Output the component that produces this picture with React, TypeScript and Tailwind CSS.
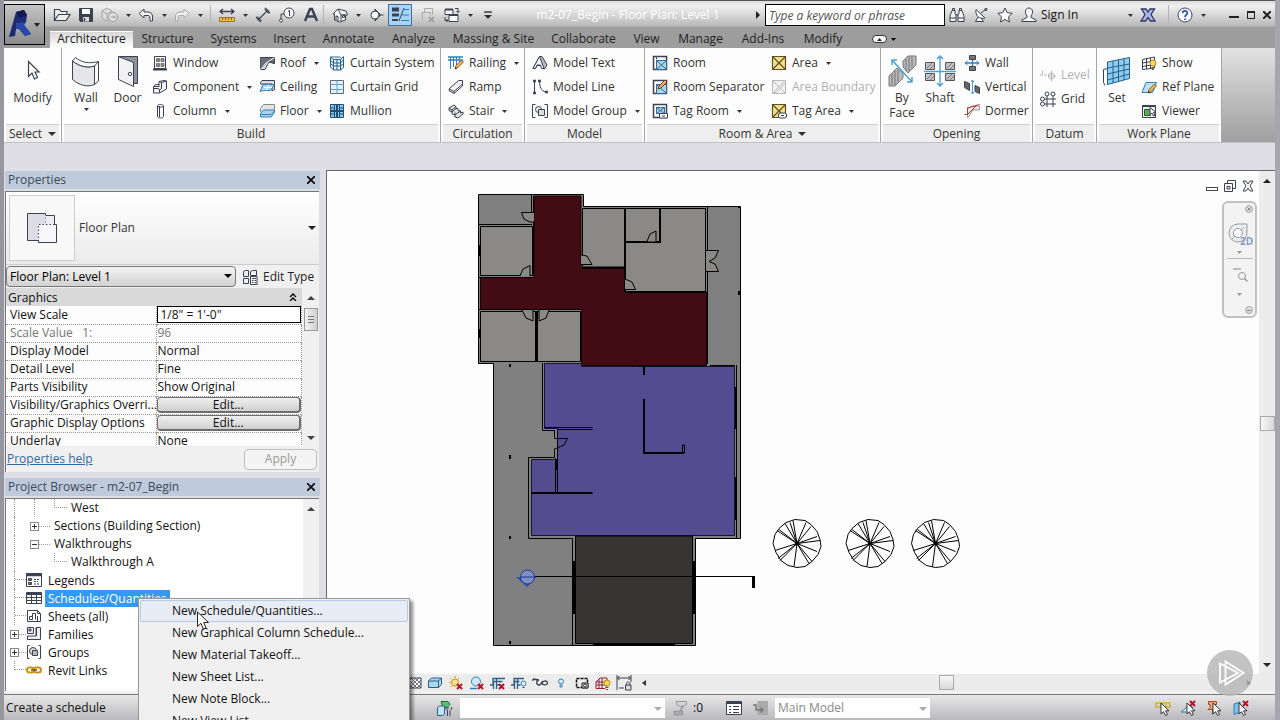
/**
 * App.tsx — Revit-style main window: ribbon, docked palettes,
 * drawing canvas, view control bar and status bar.
 */

import type { ReactNode } from 'react';
import clsx from 'clsx';

/* ------------------------------------------------------------------ */
/* Icons                                                               */
/* ------------------------------------------------------------------ */

const INK = '#3a4150';
const BLUE = '#2f7fb8';
const SKY = '#a9d6ee';
const GREY = '#a9a9a9';

interface IconProps {
  children: ReactNode;
  className?: string;
  box?: string;
}

function Icon({ children, className = 'h-4 w-4', box = '0 0 16 16' }: IconProps) {
  return (
    <svg viewBox={box} className={clsx('shrink-0', className)} fill="none" stroke={INK} aria-hidden>
      {children}
    </svg>
  );
}

function Caret({ className = 'text-[#333]' }: { className?: string }) {
  return (
    <svg viewBox="0 0 5 3" className={clsx('h-[3px] w-[5px] shrink-0', className)} aria-hidden>
      <path d="M0 0H5L2.5 3Z" fill="currentColor" />
    </svg>
  );
}

function BigCaret({ className = 'text-[#333]' }: { className?: string }) {
  return (
    <svg viewBox="0 0 8 4" className={clsx('h-1 w-2 shrink-0', className)} aria-hidden>
      <path d="M0 0H8L4 4Z" fill="currentColor" />
    </svg>
  );
}

const redCross = <path d="M9 9l5 5M14 9l-5 5" stroke="#b3122a" strokeWidth="2" />;
const pencil = (
  <g>
    <path d="M7 14l1-3.5L13.500 5l2 2L10 12.500Z" fill="#f0b64a" stroke="#6d4a1c" strokeWidth=".8" />
    <path d="M7 14l.6-2 1.400 1.400Z" fill="#222" stroke="none" />
  </g>
);
const bulb = (
  <g>
    <circle cx="12" cy="8" r="3" fill="#ffd95a" stroke="#b98a12" />
    <path d="M10.500 12.500h3M11 14.500h2" stroke="#6d5a2a" />
  </g>
);
const smallCursor = <path d="M6 3v11l2.500-2.300L10.500 15.500l2-1-2-3.700H14Z" fill="#fff" stroke="#222" strokeWidth=".9" />;

const icons = {
  open: (
    <Icon className="h-5 w-5" box="0 0 20 20">
      <path d="M2.500 15.500v-11h5l1.500 2h6v3M2.500 15.500l4-6H18l-4 6Z" fill="#eee" strokeWidth="1.200" />
    </Icon>
  ),
  save: (
    <Icon>
      <path d="M1.500 1.500h13v13h-12l-1-1Z" fill="#3a4150" />
      <path d="M4 2h8v5H4Z" fill="#fff" stroke="none" />
      <path d="M5 10h6v4.500H5Z" fill="#ddd" stroke="none" />
      <path d="M6.500 11v3" strokeWidth="1.500" />
    </Icon>
  ),
  sync: (
    <Icon className="h-5 w-5" box="0 0 20 20">
      <path d="M2 6l5-3 5 3v7l-5 3-5-3ZM2 6l5 3 5-3M7 9v7" stroke={GREY} fill="#ddd" />
      <circle cx="13" cy="12" r="4.500" stroke="#999" fill="#e4e4e4" />
      <path d="M11 12h4m-1.500-2l2 2-2 2" stroke="#999" />
    </Icon>
  ),
  undo: (
    <Icon>
      <path d="M6 2L1 6.500 6 11V8.500h4c1.500 0 2 1 2 2.500v3h2.500v-4c0-3-1.500-5-4.500-5H6Z" fill="#f4f4f4" />
    </Icon>
  ),
  redo: (
    <Icon>
      <path d="M10 2l5 4.500L10 11V8.500H6c-1.500 0-2 1-2 2.500v3H1.500v-4c0-3 1.500-5 4.500-5h4Z" fill="#eee" stroke={GREY} />
    </Icon>
  ),
  measure: (
    <Icon>
      <path d="M1 4.500h14M4 2L1 4.500 4 7M12 2l3 2.500L12 7" strokeWidth="1.300" />
      <path d="M.5 10.500h15v4H.5Z" fill="#f0c14b" stroke="#9b741a" />
      <path d="M3.500 11v2M6.500 11v2M9.500 11v2M12.500 11v2" stroke="#7a5a12" />
    </Icon>
  ),
  dimension: (
    <Icon>
      <path d="M3 13L13 3M1 10l5 5M10 1l5 5M3 9.500V13h3.500M9.500 3H13v3.500" strokeWidth="1.200" />
    </Icon>
  ),
  tag: (
    <Icon>
      <circle cx="10" cy="6" r="5" fill="#fff" />
      <path d="M9 4.500l1.500-1V9M5 7H2v6" />
      <circle cx="2" cy="13.500" r="1.500" fill="#fff" />
    </Icon>
  ),
  text: (
    <Icon>
      <path d="M2 14L7 2h2l5 12M4 9.500h8" strokeWidth="2.400" />
    </Icon>
  ),
  house: (
    <Icon>
      <path d="M1 7l5-5 8 2 1.500 4-2 .5V13l-6 2-5-2V7Z" fill="#f3f3f3" />
      <path d="M6 2l3 6v6.500M9 8l4.500-.5M4 13V9l2 .5V14M10.500 10.500v-2l2-.3v2Z" />
    </Icon>
  ),
  section: (
    <Icon>
      <path d="M7 2l5.500 6L7 14Z" fill="#30343c" />
      <circle cx="7" cy="8" r="4" fill="#fff" />
      <path d="M11 8h4.500" />
    </Icon>
  ),
  thin: (
    <Icon className="h-[18px] w-[18px]" box="0 0 18 18">
      <path d="M1 3.500h7" strokeWidth="4" />
      <path d="M1 9h7" strokeWidth="3" />
      <path d="M1 14h6" strokeWidth="2" />
      <path d="M8 15L13 2" />
      <path d="M12 3.500h6M11 9h7M10 14.500h8" stroke={BLUE} />
    </Icon>
  ),
  closeHidden: (
    <Icon>
      <path d="M4.500 5.500v-4h8v6M2.500 12.500v-7h8v3M2 5.500h8" stroke={GREY} />
      <path d="M9 10l5 5M14 10l-5 5" stroke="#999" strokeWidth="1.700" />
    </Icon>
  ),
  switchWin: (
    <Icon>
      <path d="M1 2.500h8v5H1Z" fill="#fff" />
      <path d="M5 7.500h9v7H5Z" fill="#fff" />
      <path d="M1 2.500h8M5 8h9" strokeWidth="2" />
      <path d="M11 1.500h3v4M12.500 4l1.500 1.500L15.500 4M1 10v3.500h3M2.500 12L4 13.500 2.500 15" />
    </Icon>
  ),
  customize: (
    <Icon className="h-2 w-2" box="0 0 8 8">
      <path d="M0 1h8" strokeWidth="1.500" />
      <path d="M0 4h8L4 8Z" fill="#333" stroke="none" />
    </Icon>
  ),
  binoculars: (
    <Icon>
      <path d="M3 3.500h3v3l1 1.500v6.500H1V9ZM10 3.500h3L15 9v5.500H9V8l1-1.500ZM7 8h2M3.500 1.500h2v2h-2ZM10.500 1.500h2v2h-2ZM1 11h6M9 11h6" fill="#f4f4f4" />
    </Icon>
  ),
  dish: (
    <Icon>
      <path d="M3 2.500c-1 6 3 10 9 8.500ZM7.500 6.500L13 2M5 10l-2.500 4.500h8L8 11" fill="#fff" />
      <circle cx="13" cy="2.500" r="1.200" />
    </Icon>
  ),
  star: (
    <Icon>
      <path d="M8 1l2.200 4.700 5 .6-3.700 3.500 1 5.200L8 12.400 3.500 15l1-5.200L.8 6.300l5-.6Z" fill="#fff" />
    </Icon>
  ),
  person: (
    <Icon>
      <path d="M8 1c4 0 4.500 5 2 8v1.500l5 2.500v1.500H1V13l5-2.500V9C3.500 6 4 1 8 1Z" fill="#f7f7f7" />
    </Icon>
  ),
  exchange: (
    <Icon>
      <path d="M1.500 2H6l2 3 2-3h4.500l-3.500 5.500L15 14H10.500L8 10.500 5.500 14H1l4-6.500Z" fill="#a9b7e8" stroke="#2c3566" strokeWidth="1.300" />
    </Icon>
  ),
  help: (
    <Icon>
      <circle cx="8" cy="8" r="7" fill="#fff" stroke="#3b4470" />
      <path d="M5.700 6.200c0-3 4.600-3 4.600 0C10.300 8 8 8 8 10M8 11.500v1.500" stroke="#2a4fae" strokeWidth="1.700" />
    </Icon>
  ),
  modify: (
    <Icon className="h-6 w-6" box="0 0 24 24">
      <path d="M7.500 2.500v15l3.500-3.500 2.500 6 3-1.500-2.500-5.500h4Z" fill="#fff" strokeWidth="1.200" />
    </Icon>
  ),
  wall: (
    <Icon className="h-8 w-8" box="0 0 32 32">
      <path d="M2.500 6c8 6 15 7 22 5V29.500c-7 3-15 1-22-5Z" fill="#e6e6ea" />
      <path d="M2.500 6l3-3.500c6 5 13 6.500 23 4V26l-4 3.500V11c-7 2-14 1-22-5Z" fill="#fbfbfb" />
      <path d="M24.500 11l4-4.500" />
    </Icon>
  ),
  door: (
    <Icon className="h-8 w-8" box="0 0 32 32">
      <path d="M6.500 1.500h19v27H21" fill="#8f929a" />
      <path d="M6.500 1.500l15 6v24l-15-7Z" fill="#f1f1f4" />
      <circle cx="18" cy="19" r="1.700" fill="#fff" />
    </Icon>
  ),
  window: (
    <Icon>
      <path d="M2.500 1.500h11v12h-11Z" fill="#fff" />
      <path d="M1 14.500h14" strokeWidth="2" />
      <path d="M4.500 3.500h3v3h-3ZM9 3.500h3v3H9ZM4.500 8.500h3v3h-3ZM9 8.500h3v3H9Z" fill="#888" stroke="#777" />
    </Icon>
  ),
  component: (
    <Icon>
      <path d="M1.500 7.500V14h6l7-4V2L12 1.500l-5 1V7.500Z" fill="#f2f2f4" />
      <path d="M1.500 7.500L4 5.500h3M7 2.500l2.500 1 5-1.500M9.500 3.500v6l-2 1.500V14M1.500 9.500h5l1 1.500" />
    </Icon>
  ),
  column: (
    <Icon>
      <path d="M5.500 3c0-2 6-2 6 0v10.500c0 2-6 2-6 0Z" fill="#fff" />
      <path d="M7.500 3v11M5.500 3c0 1.500 6 1.500 6 0" />
    </Icon>
  ),
  roof: (
    <Icon>
      <path d="M1.500 2.500h14v6L10 7l-4 7.500H1.500Z" fill="#dcdce0" />
      <path d="M1.500 2.500h14v6L9 6l-7.500 8.500" fill="#6c7078" />
      <path d="M15.500 2.500L7 8 1.500 14.500" stroke="#fff" />
    </Icon>
  ),
  ceiling: (
    <Icon>
      <path d="M1.500 3.500L3 1.500h12.500v9L13 12V5H1.500Z" fill="#ddd" />
      <path d="M1 12.500L4 5.500h11.500l-4 6H4.500Z" fill={SKY} stroke={BLUE} />
      <path d="M5 8.500h8M9.500 5.500L7 11.500" stroke="#fff" />
    </Icon>
  ),
  floor: (
    <Icon>
      <path d="M1.500 9V5.500l3-4h11v7L12 13" fill="#e4e4e4" stroke="#888" />
      <path d="M1.500 10.500L4.500 7h11v2.500L12 14H1.500Z" fill={SKY} stroke={BLUE} />
      <path d="M1.500 11.500H12L15.500 8" stroke={BLUE} />
    </Icon>
  ),
  curtainSystem: (
    <Icon>
      <path d="M1.500 2l3 2.500h7l3-3v11l-3 2.500h-7l-3-3Z" fill="#e6f3fa" stroke="#25618c" />
      <path d="M4.500 4.500V15M11.500 4.500V15M8 4.500V15M1.500 5.500l3 2.500h7l3-3M1.500 8.500l3 2.500h7l3-2.500M1.500 2h9l1.500 1" stroke="#25618c" />
    </Icon>
  ),
  curtainGrid: (
    <Icon>
      <path d="M1.500 1.500h13v13h-13Z" fill="#e4f1f9" stroke="#667" />
      <path d="M8 1.500v13M1.500 5.500h13M1.500 10.500h13" stroke="#5ca3d0" />
    </Icon>
  ),
  mullion: (
    <Icon>
      <path d="M1.500 1.500h13v13h-13Z" fill="#8fc4e4" stroke="#1f4f74" />
      <path d="M5.500 1.500v13M10.500 1.500v13M1.500 5h4M10.500 5h4M1.500 11h4M10.500 11h4" stroke="#1f4f74" />
      <path d="M8 2v12M1.500 8h13" stroke="#1f4f74" strokeWidth="2" />
    </Icon>
  ),
  railing: (
    <Icon>
      <path d="M0 2h15M0 5h15" stroke={BLUE} strokeWidth="1.500" />
      <path d="M2.500 2v12M5.500 2v10M8.500 2v8M11.500 2v5" stroke={BLUE} />
      {pencil}
    </Icon>
  ),
  ramp: (
    <Icon>
      <path d="M1 10L10.500 1.500h4V7L6 14.500 1.500 12Z" fill="#f4f4f4" />
      <path d="M1 10l5 2.500L14.500 5M6 12.500v2" />
    </Icon>
  ),
  stair: (
    <Icon>
      <path d="M1 5l5-3 2 1.500v2l2 0v2l2.500.5V10L15 9v2l-5 4-3-1v-2l-3-1V9L1 7.500Z" fill="#e3e3e6" />
      <path d="M1 5l3 2 4-3.500M4 9l4-3.500M7 12l5.500-4M4 7v2M7 9.500V12" />
    </Icon>
  ),
  modelText: (
    <Icon>
      <path d="M1 13.500L7.500 1.500H10l5 8.500-2 3.500h-2.500L9 10.500H5l-1.500 3Z" fill="#b9bbc1" />
      <path d="M1 13.500L7.500 1.500l4.500 12H9.500L8.500 10H5l-1.500 3.500Z" fill="#fff" />
    </Icon>
  ),
  modelLine: (
    <Icon>
      <path d="M2.500 2v12M7.500 2c0 6 2 10 6 11" />
      <path d="M1.500 1h2v2h-2ZM1.500 13h2v2h-2ZM6.500 1h2v2h-2ZM13.500 12h2v2h-2Z" fill={INK} strokeWidth=".8" />
    </Icon>
  ),
  modelGroup: (
    <Icon>
      <path d="M3.500 1.500h-3v13h3M12.500 1.500h3v13h-3" />
      <circle cx="6.500" cy="6.500" r="3" fill="#eee" />
      <path d="M6.500 6.500h6v6h-6Z" fill="#ddd" />
    </Icon>
  ),
  room: (
    <Icon>
      <path d="M1.500 1.500h13v13h-13Z" fill="#fff" strokeWidth="1.500" />
      <path d="M4.500 5.500h10v9h-10ZM4.500 5.500l10 9M14.500 5.500l-10 9M4.500 1.500v3" fill={SKY} stroke="#346a8c" />
    </Icon>
  ),
  roomSeparator: (
    <Icon>
      <path d="M1.500 1.500h13v13h-13Z" fill="#fff" strokeWidth="1.500" />
      <path d="M4.500 5.500h10v9h-10ZM4.500 5.500l10 9" fill={SKY} stroke="#346a8c" />
      <path d="M6 10l1-3 6-6 2 2-6 6Z" fill="#f0b070" stroke="#6d3c1c" />
    </Icon>
  ),
  tagRoom: (
    <Icon>
      <path d="M1.500 1.500h13v13h-13Z" fill="#fff" strokeWidth="1.500" />
      <path d="M4.500 4.500h8v6h-8ZM4.500 4.500l8 6M12.500 4.500l-8 6" fill={SKY} stroke="#346a8c" />
      <path d="M7.500 10.500h8v4.500h-8Z" fill="#fff" />
      <path d="M10 13h3" />
    </Icon>
  ),
  area: (
    <Icon>
      <path d="M1.500 1.500h13v13h-13ZM1.500 1.500l13 13M14.500 1.500l-13 13" fill="#f8e08a" stroke="#5c4f28" strokeWidth="1.200" />
    </Icon>
  ),
  areaBoundary: (
    <Icon>
      <path d="M1.500 1.500h13v13h-13ZM1.500 1.500l6 6M14.500 14.500l-5-5M2 14L12.500 3l1.500 1.500L5 13.500Z" fill="#f1f1f1" stroke="#b8b8b8" />
    </Icon>
  ),
  tagArea: (
    <Icon>
      <path d="M1.500 1.500h13v13h-13ZM1.500 1.500l13 13M14.500 1.500l-13 13" fill="#f8e08a" stroke="#5c4f28" strokeWidth="1.200" />
      <rect x="7.500" y="10" width="8" height="5" rx="2" fill="#fff" />
      <path d="M10 12.500h3" />
    </Icon>
  ),
  byFace: (
    <Icon className="h-8 w-8" box="0 0 32 32">
      <path d="M17 12V6l5-5h8v9l-8 8ZM3 31V21l8-8 6 5v5l-8 8Z" fill="#b9b9bd" stroke="#777" />
      <path d="M20 4v12M23 2v14M26 2v11M6 19v11M9 16v14M12 15v12" stroke="#777" />
      <path d="M6 5l20 22M6 10V5h5M26 22v5h-5" stroke="#4f9fd6" strokeWidth="1.500" />
    </Icon>
  ),
  shaft: (
    <Icon className="h-8 w-8" box="0 0 32 32">
      <path d="M1.500 7.500h9v7h-9ZM21.500 7.500h9v7h-9ZM1.500 18.500h9v7h-9ZM21.500 18.500h9v7h-9Z" fill="#c2c2c4" stroke="#555" />
      <path d="M3 13l5-5M6 14l4-4M23 13l5-5M26 14l4-4M3 24l5-5M6 25l4-4M23 24l5-5M26 25l4-4" stroke="#777" />
      <path d="M16 1v30M0 16.500h32M13 4l3-3 3 3M13 28l3 3 3-3" stroke="#4f9fd6" strokeWidth="1.400" />
    </Icon>
  ),
  wallOpening: (
    <Icon>
      <path d="M5.500 .5h6v4h-6ZM5.500 11.500h6v4h-6Z" fill="#777" />
      <path d="M8.500 5v6M1 8h14" stroke={BLUE} strokeWidth="1.300" />
      <path d="M3.500 6L1 8l2.500 2M12.500 6L15 8l-2.500 2" stroke={BLUE} />
    </Icon>
  ),
  vertical: (
    <Icon>
      <path d="M.5 2.500l5 2v7l-5-3ZM11 6.500l4.500 2v6l-4.500-2Z" fill="#666" />
      <path d="M8.500 1v14M7 3l1.500-2L10 3M7 13l1.500 2 1.500-2" stroke="#4f9fd6" />
    </Icon>
  ),
  dormer: (
    <Icon>
      <path d="M3.500 14.500v-9l5-2.500h7v4H9l-5 7.500Z" fill="#ececec" stroke="#999" />
      <path d="M.5 11.500h3v-7M3.500 5l12-3.500M3.500 11.500L13 2" stroke="#a83a36" />
    </Icon>
  ),
  level: (
    <Icon>
      <path d="M0 8h9M2.500 4v4" stroke="#b4b4b4" strokeDasharray="3 1" />
      <circle cx="11.500" cy="9" r="3" stroke="#b4b4b4" />
      <path d="M11.500 4v10M8 9h8" stroke="#b4b4b4" />
    </Icon>
  ),
  grid: (
    <Icon>
      <circle cx="7" cy="3" r="2" />
      <circle cx="13" cy="3" r="2" />
      <circle cx="2.500" cy="8" r="2" />
      <circle cx="2.500" cy="13" r="2" />
      <path d="M7 5v11M13 5v11M4.500 8H16M4.500 13H16" />
    </Icon>
  ),
  set: (
    <Icon className="h-8 w-8" box="0 0 32 32">
      <path d="M4 30.500l-1.500-3V14.500l4-1" fill="#fff" />
      <path d="M6.500 7l22-4.500v21l-22 6Z" fill="#8fcdf0" stroke="#25618c" />
      <path d="M12 6V28M17.500 5V26.500M23 4v21M6.500 13l22-4M6.500 19l22-5M6.500 25l22-6" stroke="#25618c" />
    </Icon>
  ),
  show: (
    <Icon>
      <path d="M1.500 4.500L13.500 2v11L1.500 14.500ZM5.500 3.500V14M9.500 3v10.500M1.500 8l12-2M1.500 11.500l12-2" fill="#fff" />
      {bulb}
    </Icon>
  ),
  refPlane: (
    <Icon>
      <path d="M1 13.500L5 3.500h10.500l-4 10Z" fill="#bfe0f3" stroke={BLUE} />
      {pencil}
    </Icon>
  ),
  viewer: (
    <Icon>
      <path d="M1.500 2.500h13v12h-13Z" fill="#eee" />
      <path d="M1.500 3h13" strokeWidth="2" />
      <path d="M3.500 6.500h6v6h-6Z" fill="#62a65c" stroke="#27602a" />
      <path d="M9 4.500v7l2-1.500 1.500 3 1.500-.7-1.500-3H15Z" fill="#fff" />
    </Icon>
  ),
  editType: (
    <Icon>
      <path d="M1.500 2.500l2-1h3v6h-5ZM8.500 2.500l2-1h4v5M1.500 9.500h5v5h-5ZM8.500 2.500v4h6" />
      <path d="M8.500 7.500h6.500v8H8.500ZM10 9.500h4M10 11.500h1.500M12.500 11.500H14M10 13.500h1.500M12.500 13.500H14" fill="#fff" />
    </Icon>
  ),
  legends: (
    <Icon>
      <path d="M.5 1.500h15v13H.5Z" fill="#fff" />
      <path d="M.5 3h15" strokeWidth="2.500" />
      <path d="M2.500 6.500h3v2h-3ZM2.500 10.500h3v2h-3Z" fill="#777" />
      <path d="M8 7.500h6M8 9.500h4M8 12h6" strokeDasharray="2 1" />
    </Icon>
  ),
  schedules: (
    <Icon>
      <path d="M.5 2.500h15v11H.5Z" fill="#fff" />
      <path d="M.5 4h15" strokeWidth="2" />
      <path d="M5.500 3v10M10.500 3v10M.5 7.500h15M.5 10.500h15" />
    </Icon>
  ),
  sheets: (
    <Icon>
      <path d="M1.500 2.500h10l3 3v8h-13Z" fill="#fff" />
      <path d="M11.500 2.500v3h3M3.500 8.500h3v3h-3ZM6.500 8.500v-3h3v6M11.500 8v5" />
    </Icon>
  ),
  families: (
    <Icon>
      <path d="M1.500 1.500h6v6h-6ZM10 1.500h4.500v12h-13V10H10Z" fill="#eee" />
      <path d="M3 3h2v2H3ZM10.500 2v8" />
    </Icon>
  ),
  groups: (
    <Icon>
      <path d="M3.500 1.500h-2v13h2M12.500 1.500h2v13h-2" />
      <circle cx="7" cy="7" r="3.500" fill="#ddd" />
      <path d="M6.500 6.500h5v5h-5Z" fill="#bbb" />
    </Icon>
  ),
  links: (
    <Icon>
      <rect x="1" y="5.500" width="7" height="5" rx="2.500" stroke="#c89414" strokeWidth="2" />
      <rect x="8" y="5.500" width="7" height="5" rx="2.500" stroke="#c89414" strokeWidth="2" />
      <path d="M5 8h6" stroke="#6d4f08" strokeWidth="1.500" />
    </Icon>
  ),
  hatch: (
    <Icon>
      <path d="M3 3h12v10H3Z" fill="#fff" />
      <path d="M3 6l3-3M3 10l7-7M3 13L13 3M7 13l8-8M11 13l4-4M3 9l4 4M3 5l8 8M5 3l10 10M9 3l6 6" strokeWidth=".7" />
    </Icon>
  ),
  visualStyle: (
    <Icon>
      <path d="M1.500 6l3-3h10v6.500l-3 3h-10Z" fill={SKY} stroke="#2d5e86" />
      <path d="M1.500 6h10v6.500M11.500 6l3-3" stroke="#2d5e86" />
    </Icon>
  ),
  sun: (
    <Icon>
      <circle cx="7" cy="7.500" r="3.500" fill="#fbe38a" stroke="#c58a1a" />
      <path d="M7 1v2M1 7.500h1.500M2.500 3l1 1M11 3l-1 1M2.500 12l1-1" stroke="#c58a1a" />
      {redCross}
    </Icon>
  ),
  shadow: (
    <Icon>
      <circle cx="7" cy="6.500" r="4.500" fill="#cfe6f4" stroke={BLUE} />
      <path d="M1 13.500h7" stroke={BLUE} strokeWidth="1.500" />
      {redCross}
    </Icon>
  ),
  crop: (
    <Icon>
      <path d="M0 10h3V3.500h12M3.500 14V6.500h9M6.500 10h3M6.500 14V3.500" stroke="#2d5e86" strokeWidth="1.300" />
      {redCross}
    </Icon>
  ),
  cropShow: (
    <Icon>
      <path d="M0 10h3V3.500h10M3.500 14V6.500h5M6.500 10h3M6.500 14V3.500" stroke="#2d5e86" strokeWidth="1.300" />
      <circle cx="12.500" cy="8.500" r="2.500" fill="#e6f4fc" stroke={BLUE} />
      <path d="M11.500 12.500h2" />
    </Icon>
  ),
  glasses: (
    <Icon>
      <path d="M1 4l6 1M7 5c-3 0-3 5 0 5s3-5 3-2.500M10 8c0-2 5-3 5.500-.5S11 11 10 8M1 4v2" strokeWidth="1.300" />
    </Icon>
  ),
  lightbulb: (
    <Icon>
      <circle cx="8" cy="6.500" r="2.500" fill="#d8effc" stroke={BLUE} />
      <path d="M7 10h2v2H7Z" fill="#fff" stroke={BLUE} />
    </Icon>
  ),
  cropRegion: (
    <Icon>
      <path d="M2.500 3.500h11v9h-11Z" stroke="#111" strokeDasharray="3 1" strokeWidth="1.500" />
      <path d="M8 8h6v5H8Z" fill="#fff" stroke="#111" />
      <circle cx="11" cy="10.500" r="1.500" stroke="#111" />
    </Icon>
  ),
  analytical: (
    <Icon>
      <path d="M1 7l4-4h7v8l-2 2.500H1ZM4 4v9M7 3v10M1 7h11M1 10h11" stroke="#8b2630" />
      {bulb}
    </Icon>
  ),
  constraint: (
    <Icon>
      <path d="M1 0v15M15 0v7M1 3h14M3.500 1L1.500 3l2 2M12.500 1l2 2-2 2M3 13h5" />
      <path d="M9.500 10h5.500v5H9.500ZM10.500 10V8.500c0-2 3.500-2 3.500 0V10" fill="#ddd" />
    </Icon>
  ),
  worksets: (
    <Icon className="h-[18px] w-[18px]" box="0 0 18 18">
      <path d="M5 2.500h7l2 3-3 3H7Z" fill="#62c06c" stroke="#1e6f35" />
      <path d="M1.500 8.500l2-1.500h5v8l-2 1.500h-5Z" fill="#c5e4f7" stroke="#23608f" />
      <path d="M11.500 17v-6l-1.500-1V8M14 17v-5M15.500 8v2l-1.500 1.500M12 8v2" />
    </Icon>
  ),
  filter: (
    <Icon>
      <path d="M3.500 1.500h10v3l-4 2H7l-3.500-2Z" fill="#d4d4d4" stroke="#999" />
      <path d="M10.500 5.500L7 11.500M1.500 11.500h8v3h-8Z" fill="#b4b4b4" stroke="#999" strokeWidth="1.500" />
    </Icon>
  ),
  optionSet: (
    <Icon>
      <path d="M.5 1.500h15v13H.5Z" fill="#fff" />
      <path d="M.5 3h15" strokeWidth="2" />
      <path d="M3 6.500h2M3 9.500h2M3 12.500h2M7 6.500h6M7 9.500h6M7 12.500h6" />
    </Icon>
  ),
  optionPick: (
    <Icon>
      <path d="M6 1.500h9.500v13H6Z" fill="#aaa" stroke="#aaa" />
      <path d="M1 5h3v5h7M8.500 7.500L11 10l-2.500 2.500" stroke="#777" strokeWidth="1.500" />
    </Icon>
  ),
  pickLinks: (
    <Icon>
      <path d="M1 3h5v4H1ZM6 3h5v4H6ZM11 3h4v4h-4Z" stroke="#c9b52e" strokeWidth="1.500" />
      {smallCursor}
    </Icon>
  ),
  pickUnderlay: (
    <Icon>
      <path d="M0 12h8l4-5H6Z" fill="#cfe8f6" stroke={BLUE} />
      <path d="M9 1l5 5M14 1L9 6" stroke="#b3122a" strokeWidth="2" />
      {smallCursor}
    </Icon>
  ),
  pickPinned: (
    <Icon>
      <path d="M1.500 1.500h8v3H8v3l2 2H1l2-2v-3H1.500ZM5.500 9.500v5" fill="#f0a071" stroke="#a44e20" />
      {smallCursor}
    </Icon>
  ),
  pickFace: (
    <Icon>
      <path d="M1 4l6-2v10l-6 2.500Z" fill="#7fc1e8" stroke={BLUE} />
      <path d="M10 1l5 5M15 1l-5 5" stroke="#b3122a" strokeWidth="2" />
      {smallCursor}
    </Icon>
  ),
};

type IconName = keyof typeof icons;

/* ------------------------------------------------------------------ */
/* Title bar and tabs                                                  */
/* ------------------------------------------------------------------ */

function QuickButton({ icon, label }: { icon: IconName; label: string }) {
  return (
    <button type="button" aria-label={label} className="flex h-[22px] w-6 items-center justify-center">
      {icons[icon]}
    </button>
  );
}

function QuickCaret({ label }: { label: string }) {
  return (
    <button type="button" aria-label={label} className="flex h-[22px] w-3 items-center justify-center">
      <Caret />
    </button>
  );
}

const divider = <span className="mx-1 h-5 w-px bg-[#b4b4b4]" />;

function TitleBar() {
  return (
    <div className="flex h-[27px] items-center pt-[3px]">
      <div className="flex items-center pl-[5px]">
        <QuickButton icon="open" label="Open" />
        <QuickButton icon="save" label="Save" />
        <QuickButton icon="sync" label="Synchronize" />
        <QuickCaret label="Synchronize options" />
        <QuickButton icon="undo" label="Undo" />
        <QuickCaret label="Undo history" />
        <QuickButton icon="redo" label="Redo" />
        <QuickCaret label="Redo history" />
        {divider}
        <QuickButton icon="measure" label="Measure" />
        <QuickCaret label="Measure options" />
        <QuickButton icon="dimension" label="Aligned Dimension" />
        <QuickButton icon="tag" label="Tag by Category" />
        <QuickButton icon="text" label="Text" />
        <span className="h-5 w-px bg-[#b4b4b4]" />
        <span className="w-1" />
        <QuickButton icon="house" label="Default 3D View" />
        <QuickCaret label="3D view options" />
        <QuickButton icon="section" label="Section" />
        <button
          type="button"
          aria-label="Thin Lines"
          aria-pressed
          className="flex h-[22px] w-6 items-center justify-center border border-[#3f6f9c] bg-[#a8d3f5]"
        >
          {icons.thin}
        </button>
        <span className="w-1" />
        <QuickButton icon="closeHidden" label="Close Hidden Windows" />
        <QuickButton icon="switchWin" label="Switch Windows" />
        <QuickCaret label="Switch Windows list" />
        <QuickButton icon="customize" label="Customize Quick Access Toolbar" />
      </div>

      <h1 className="min-w-0 flex-1 truncate text-center text-xs text-white">m2-07_Begin - Floor Plan: Level 1</h1>

      <svg viewBox="0 0 4 8" className="mr-[5px] h-2 w-1" aria-hidden>
        <path d="M0 0L4 4L0 8Z" fill="#222" />
      </svg>
      <input
        type="text"
        aria-label="Search help"
        placeholder="Type a keyword or phrase"
        className="h-[22px] w-[180px] border border-black bg-white px-[3px] text-xs italic placeholder:text-[#555]"
      />
      <div className="flex items-center">
        <QuickButton icon="binoculars" label="Search" />
        <QuickButton icon="dish" label="Subscription Center" />
        <QuickButton icon="star" label="Favorites" />
        <button type="button" className="flex h-[22px] w-[107px] items-center gap-1 pl-1 text-xs text-[#111]">
          {icons.person}
          Sign In
        </button>
        <QuickCaret label="Sign In options" />
        <QuickButton icon="exchange" label="Exchange Apps" />
        <span className="w-1" />
        {divider}
        <QuickButton icon="help" label="Help" />
        <QuickCaret label="Help options" />
      </div>
      <div className="ml-4 flex items-center">
        <button type="button" aria-label="Minimize" className="flex h-5 w-[18px] items-center justify-center">
          <span className="mt-1 h-0.5 w-[10px] bg-[#222]" />
        </button>
        <button type="button" aria-label="Maximize" className="flex h-5 w-4 items-center justify-center">
          <span className="h-2 w-2 border border-t-2 border-[#222]" />
        </button>
        <button type="button" aria-label="Close" className="flex h-5 w-4 items-center justify-center">
          <Icon className="h-2 w-2" box="0 0 8 8">
            <path d="M0 0L8 8M8 0L0 8" stroke="#222" strokeWidth="2" />
          </Icon>
        </button>
      </div>
    </div>
  );
}

const tabs = [
  { name: 'Structure', width: 'w-[69px]' },
  { name: 'Systems', width: 'w-[63px]' },
  { name: 'Insert', width: 'w-[49px]' },
  { name: 'Annotate', width: 'w-[69px]' },
  { name: 'Analyze', width: 'w-[61px]' },
  { name: 'Massing & Site', width: 'w-[99px]' },
  { name: 'Collaborate', width: 'w-[81px]' },
  { name: 'View', width: 'w-[45px]' },
  { name: 'Manage', width: 'w-[63px]' },
  { name: 'Add-Ins', width: 'w-[62px]' },
  { name: 'Modify', width: 'w-[58px]' },
];

function TabStrip() {
  return (
    <div role="tablist" className="flex h-[21px] items-end pl-[5px] text-xs text-[#222]">
      <button
        type="button"
        role="tab"
        aria-selected
        className="h-[17px] w-[83px] whitespace-nowrap border-t border-white bg-gradient-to-b from-[#d8d8d8] to-white pb-0.5 leading-[14px]"
      >
        Architecture
      </button>
      {tabs.map((tab) => (
        <button
          key={tab.name}
          type="button"
          role="tab"
          aria-selected={false}
          className={clsx('h-[17px] whitespace-nowrap pb-px leading-[14px]', tab.width)}
        >
          {tab.name}
        </button>
      ))}
      <button type="button" aria-label="Minimize ribbon" className="ml-5 flex h-[17px] items-center gap-1 pb-px">
        <span className="flex h-2 w-[15px] items-center justify-center rounded-sm border border-[#333] bg-white">
          <Caret className="rotate-180 text-[#222]" />
        </span>
        <Caret className="text-black" />
      </button>
    </div>
  );
}

/* ------------------------------------------------------------------ */
/* Ribbon                                                              */
/* ------------------------------------------------------------------ */

interface ToolProps {
  icon: IconName;
  label: string;
  menu?: boolean;
  disabled?: boolean;
}

function Tool({ icon, label, menu, disabled }: ToolProps) {
  return (
    <button
      type="button"
      disabled={disabled}
      className="flex h-6 items-center gap-[5px] whitespace-nowrap text-[#333] disabled:text-[#b0b0b0]"
    >
      {icons[icon]}
      {label}
      {menu && <Caret className="ml-[3px]" />}
    </button>
  );
}

function BigTool({ icon, label, menu, className }: ToolProps & { className: string }) {
  return (
    <button type="button" className={clsx('flex flex-col items-center gap-[3px] pt-1 text-[#333]', className)}>
      <span className="flex h-8 items-center">{icons[icon]}</span>
      <span className="leading-[15px]">{label}</span>
      {menu && <Caret />}
    </button>
  );
}

function ToolColumn({ tools, className }: { tools: ToolProps[]; className?: string }) {
  return (
    <div className={clsx('flex flex-col', className)}>
      {tools.map((tool) => (
        <Tool key={tool.label} {...tool} />
      ))}
    </div>
  );
}

interface PanelProps {
  title: string;
  width: string;
  menu?: boolean;
  children: ReactNode;
}

function Panel({ title, width, menu, children }: PanelProps) {
  return (
    <section className={clsx('flex shrink-0 flex-col border-r border-[#a6a6a6] bg-[#fdfdfd]', width)}>
      <div className="flex h-[76px] pt-[3px]">{children}</div>
      <h2 className="mx-0.5 flex h-[18px] items-center justify-center gap-[6px] border-t border-[#cfcfcf] bg-[#eee] text-[#333]">
        {title}
        {menu && <BigCaret />}
      </h2>
    </section>
  );
}

function Ribbon() {
  return (
    <div className="flex h-[95px] shrink-0 border-b border-[#c0c0c4] bg-gradient-to-b from-[#e2e2e2] to-[#9f9f9f] text-xs">
      <Panel title="Select" width="w-[58px]" menu>
        <BigTool icon="modify" label="Modify" className="w-[58px]" />
      </Panel>
      <Panel title="Build" width="w-[379px]">
        <BigTool icon="wall" label="Wall" menu className="w-12" />
        <BigTool icon="door" label="Door" className="w-[35px]" />
        <ToolColumn
          className="w-[107px] pl-[7px]"
          tools={[
            { icon: 'window', label: 'Window' },
            { icon: 'component', label: 'Component', menu: true },
            { icon: 'column', label: 'Column', menu: true },
          ]}
        />
        <ToolColumn
          className="w-[70px] pl-[7px]"
          tools={[
            { icon: 'roof', label: 'Roof', menu: true },
            { icon: 'ceiling', label: 'Ceiling' },
            { icon: 'floor', label: 'Floor', menu: true },
          ]}
        />
        <ToolColumn
          className="pl-[7px]"
          tools={[
            { icon: 'curtainSystem', label: 'Curtain System' },
            { icon: 'curtainGrid', label: 'Curtain Grid' },
            { icon: 'mullion', label: 'Mullion' },
          ]}
        />
      </Panel>
      <Panel title="Circulation" width="w-[84px]">
        <ToolColumn
          className="pl-[7px]"
          tools={[
            { icon: 'railing', label: 'Railing', menu: true },
            { icon: 'ramp', label: 'Ramp' },
            { icon: 'stair', label: 'Stair', menu: true },
          ]}
        />
      </Panel>
      <Panel title="Model" width="w-[120px]">
        <ToolColumn
          className="pl-[7px]"
          tools={[
            { icon: 'modelText', label: 'Model Text' },
            { icon: 'modelLine', label: 'Model Line' },
            { icon: 'modelGroup', label: 'Model Group', menu: true },
          ]}
        />
      </Panel>
      <Panel title="Room & Area" width="w-[236px]" menu>
        <ToolColumn
          className="w-[119px] pl-[7px]"
          tools={[
            { icon: 'room', label: 'Room' },
            { icon: 'roomSeparator', label: 'Room Separator' },
            { icon: 'tagRoom', label: 'Tag Room', menu: true },
          ]}
        />
        <ToolColumn
          className="pl-[7px]"
          tools={[
            { icon: 'area', label: 'Area', menu: true },
            { icon: 'areaBoundary', label: 'Area Boundary', disabled: true },
            { icon: 'tagArea', label: 'Tag Area', menu: true },
          ]}
        />
      </Panel>
      <Panel title="Opening" width="w-[152px]">
        <BigTool icon="byFace" label="By Face" className="w-[42px] px-1" />
        <BigTool icon="shaft" label="Shaft" className="w-[34px]" />
        <ToolColumn
          className="pl-[7px]"
          tools={[
            { icon: 'wallOpening', label: 'Wall' },
            { icon: 'vertical', label: 'Vertical' },
            { icon: 'dormer', label: 'Dormer' },
          ]}
        />
      </Panel>
      <Panel title="Datum" width="w-16">
        <ToolColumn
          className="pl-[7px] pt-3"
          tools={[
            { icon: 'level', label: 'Level', disabled: true },
            { icon: 'grid', label: 'Grid' },
          ]}
        />
      </Panel>
      <Panel title="Work Plane" width="w-[125px]">
        <BigTool icon="set" label="Set" className="w-10" />
        <ToolColumn
          className="pl-1"
          tools={[
            { icon: 'show', label: 'Show' },
            { icon: 'refPlane', label: 'Ref Plane' },
            { icon: 'viewer', label: 'Viewer' },
          ]}
        />
      </Panel>
    </div>
  );
}

/* ------------------------------------------------------------------ */
/* Docked palettes                                                     */
/* ------------------------------------------------------------------ */

function PaletteTitle({ children }: { children: ReactNode }) {
  return (
    <header className="mr-0.5 flex h-[18px] shrink-0 items-center justify-between bg-[#bfcbdb] pl-[3px] pr-[5px] text-[#3d4a5c]">
      <h2>{children}</h2>
      <button type="button" aria-label="Close palette">
        <Icon className="h-2 w-2" box="0 0 8 8">
          <path d="M0 0L8 8M8 0L0 8" stroke="#000" strokeWidth="1.600" />
        </Icon>
      </button>
    </header>
  );
}

type PropertyKind = 'input' | 'text' | 'muted' | 'button';

const properties: { name: string; value: string; kind: PropertyKind }[] = [
  { name: 'View Scale', value: `1/8" = 1'-0"`, kind: 'input' },
  { name: 'Scale Value   1:', value: '96', kind: 'muted' },
  { name: 'Display Model', value: 'Normal', kind: 'text' },
  { name: 'Detail Level', value: 'Fine', kind: 'text' },
  { name: 'Parts Visibility', value: 'Show Original', kind: 'text' },
  { name: 'Visibility/Graphics Overri...', value: 'Edit...', kind: 'button' },
  { name: 'Graphic Display Options', value: 'Edit...', kind: 'button' },
  { name: 'Underlay', value: 'None', kind: 'text' },
];

function PropertyValue({ name, value, kind }: (typeof properties)[number]) {
  if (kind === 'input') {
    return (
      <input
        type="text"
        aria-label={name}
        defaultValue={value}
        className="block h-[17px] w-full border border-black bg-white px-[3px]"
      />
    );
  }
  if (kind === 'button') {
    return (
      <button
        type="button"
        aria-label={`${name} ${value}`}
        className="block h-4 w-full rounded-sm border border-b-2 border-r-2 border-[#6e6e6e] bg-gradient-to-b from-[#f0f0f0] to-[#cfcfcf] leading-[13px]"
      >
        {value}
      </button>
    );
  }
  return <span className="block pl-px leading-4">{value}</span>;
}

function PropertiesPalette() {
  return (
    <section className="flex h-[301px] shrink-0 flex-col">
      <PaletteTitle>Properties</PaletteTitle>
      <div className="mr-[3px] mt-0.5 flex min-h-0 flex-1 flex-col border-l border-t border-[#777] bg-[#f0f0f0]">
        <button
          type="button"
          className="flex h-[73px] shrink-0 items-center border-b border-[#ccc] bg-gradient-to-b from-white to-[#ebebeb] px-[3px] text-[#333]"
        >
          <span className="flex h-[66px] w-[66px] items-center justify-center border border-[#ccc] bg-[#f8f8f8]">
            <Icon className="h-8 w-8" box="0 0 32 32">
              <path d="M1.500 1.500h18v27h-18Z" fill="#dcdce6" />
              <path d="M19.500 3.500h9v9h-9Z" fill="#ececf2" stroke="none" />
              <path d="M19.500 3.500h9v9" />
              <path d="M12.500 12.500h18v18h-18Z" fill="#f7f7fc" />
              <path d="M12.500 28v-15.500h16" strokeDasharray="2 1.500" stroke="#f7f7fc" />
              <path d="M19.500 3.500v9" strokeDasharray="2 1.500" stroke="#dcdce6" />
            </Icon>
          </span>
          <span className="ml-1 flex-1 text-left">Floor Plan</span>
          <BigCaret className="text-[#222]" />
        </button>

        <div className="flex h-[23px] shrink-0 items-center">
          <div className="relative h-[21px] w-[230px]">
            <select
              aria-label="Instance"
              className="h-full w-full appearance-none rounded-sm border border-[#777] bg-gradient-to-b from-[#f3f3f3] to-[#d2d2d2] pl-[3px] pr-5 text-xs"
            >
              <option>Floor Plan: Level 1</option>
            </select>
            <BigCaret className="pointer-events-none absolute right-1 top-2 text-black" />
          </div>
          <button type="button" className="ml-1.5 flex items-center gap-[5px] text-[#222]">
            {icons.editType}
            Edit Type
          </button>
        </div>

        <div className="flex min-h-0 flex-1 overflow-hidden">
          <div className="w-[296px]">
            <table className="w-full table-fixed border-collapse bg-[#fdfdfd] text-[#111]">
              <colgroup>
                <col className="w-[150px]" />
                <col />
              </colgroup>
              <thead>
                <tr className="h-[18px] bg-[#d9d9d9]">
                  <th scope="colgroup" className="pl-0.5 text-left font-normal leading-[17px]">
                    Graphics
                  </th>
                  <td className="pr-[5px]">
                    <Icon className="ml-auto h-2 w-2" box="0 0 8 8">
                      <path d="M1 4l3-3 3 3M1 8l3-3 3 3" stroke="#000" strokeWidth="1.300" />
                    </Icon>
                  </td>
                </tr>
              </thead>
              <tbody>
                {properties.map((row) => (
                  <tr
                    key={row.name}
                    className={clsx('h-[18px] border-b border-dotted border-[#999]', row.kind === 'muted' && 'text-[#777]')}
                  >
                    <th scope="row" className="overflow-hidden whitespace-pre p-0 pl-1 text-left font-normal leading-4">
                      {row.name}
                    </th>
                    <td className="border-x border-dotted border-[#999] p-0">
                      <PropertyValue {...row} />
                    </td>
                  </tr>
                ))}
              </tbody>
            </table>
          </div>
          <div className="flex flex-1 flex-col items-center pt-2">
            <BigCaret className="rotate-180 text-[#444]" />
            <div className="mt-2 flex h-[23px] w-3.5 flex-col items-center justify-center gap-0.5 border border-[#999] bg-gradient-to-r from-[#f4f4f4] to-[#cfcfcf]">
              <span className="h-px w-1.5 bg-[#777]" />
              <span className="h-px w-1.5 bg-[#777]" />
              <span className="h-px w-1.5 bg-[#777]" />
            </div>
            <BigCaret className="mb-1.5 mt-auto text-[#444]" />
          </div>
        </div>

        <div className="flex h-[26px] shrink-0 items-center justify-between pr-0.5">
          <a href="#help" className="pl-px text-[#3469a0] underline">
            Properties help
          </a>
          <button type="button" disabled className="h-[21px] w-[73px] rounded-sm border border-[#bdbdbd] bg-[#f4f4f4] text-[#999]">
            Apply
          </button>
        </div>
      </div>
    </section>
  );
}

const dots = 'border-dotted border-[#999]';

function Twisty({ open }: { open?: boolean }) {
  return (
    <button
      type="button"
      aria-label={open ? 'Collapse' : 'Expand'}
      className="flex h-[9px] w-[9px] items-center justify-center border border-[#888] bg-white"
    >
      <svg viewBox="0 0 5 5" className="h-[5px] w-[5px]" stroke="#333" aria-hidden>
        <path d={open ? 'M0 2.500H5' : 'M0 2.500H5M2.500 0V5'} />
      </svg>
    </button>
  );
}

// Children of the "Views" branch: no icon, indented under the second guide line.
function ViewRow({ label, depth, open }: { label: string; depth: 1 | 2; open?: boolean }) {
  return (
    <li className="flex h-[18px] items-center">
      <span className={clsx('ml-2 h-full border-l', dots, depth === 1 ? 'w-[18px]' : 'w-5')} />
      {depth === 1 ? (
        <>
          <span className="-ml-0.5 flex w-[9px]">
            <Twisty open={open} />
          </span>
          <span className={clsx('w-[11px] border-t', dots)} />
        </>
      ) : (
        <>
          <span className={clsx('h-full w-5 border-l', label === 'West' ? dots : 'border-transparent')} />
          <span className={clsx('h-[9px] w-[13px] self-start border-b border-l', dots)} />
        </>
      )}
      <span className="pl-1">{label}</span>
    </li>
  );
}

interface BranchProps {
  icon: IconName;
  label: string;
  expandable?: boolean;
  selected?: boolean;
}

function BranchRow({ icon, label, expandable, selected }: BranchProps) {
  return (
    <li className="flex h-[18px] items-center">
      {expandable ? (
        <span className="flex w-[20px] items-center pl-1">
          <Twisty />
          <span className={clsx('flex-1 border-t', dots)} />
        </span>
      ) : (
        <span className={clsx('ml-2 w-3 border-l', dots, label === 'Revit Links' ? 'h-[9px] self-start' : 'h-full')}>
          <span className={clsx('block h-[9px] border-b', dots)} />
        </span>
      )}
      {icons[icon]}
      <span className={clsx('ml-[3px] px-[3px] leading-[17px]', selected && 'bg-[#3399f3] text-white')}>{label}</span>
    </li>
  );
}

function ProjectBrowser() {
  return (
    <section className="mt-[6px] flex min-h-0 flex-1 flex-col">
      <PaletteTitle>Project Browser - m2-07_Begin</PaletteTitle>
      <div className="mr-[3px] mt-0.5 flex min-h-0 flex-1 border-l border-t border-[#777] bg-white">
        <ul className="flex-1 text-[#111]">
          <ViewRow label="West" depth={2} />
          <ViewRow label="Sections (Building Section)" depth={1} />
          <ViewRow label="Walkthroughs" depth={1} open />
          <ViewRow label="Walkthrough A" depth={2} />
          <BranchRow icon="legends" label="Legends" />
          <BranchRow icon="schedules" label="Schedules/Quantities" selected />
          <BranchRow icon="sheets" label="Sheets (all)" />
          <BranchRow icon="families" label="Families" expandable />
          <BranchRow icon="groups" label="Groups" expandable />
          <BranchRow icon="links" label="Revit Links" />
        </ul>
        <div className="flex w-4 flex-col items-center bg-[#f0f0f0] pt-2">
          <BigCaret className="rotate-180 text-[#444]" />
        </div>
      </div>
    </section>
  );
}

/* ------------------------------------------------------------------ */
/* Drawing canvas                                                      */
/* ------------------------------------------------------------------ */

const treeCenters = [797, 870, 935.5];

function Tree({ x }: { x: number }) {
  return (
    <g transform={`translate(${x} 543.500)`} stroke="#000" fill="none">
      <path d="M-2-24L8-23 14-19 20-12 23-4 24 3 21 11 15 18 8 23 0 24-9 22-16 17-21 9-24 0-22-9-18-15-11-21Z" />
      <path d="M0 0L-20-13M0 0L-12-20M0 0L-7-21M0 0L-4-23M0 0L9-21M0 0L14-17M0 0L20-7M0 0L23-3M0 0L20 8M0 0L12 20M0 0L15 18M0 0L-3 23M0 0L-17 17M0 0L-19 15M0 0L-22 7M0 0L-18-14" />
      <circle r="1.500" fill="#000" />
    </g>
  );
}

function FloorPlan() {
  return (
    <svg viewBox="327 171 932 504" width="932" height="504" className="shrink-0" role="img" aria-label="Level 1 floor plan">
      {/* slab and exterior wall */}
      <path
        d="M478.500 194.500H583.500V206.500H740.500V538.500H695.500V645.500H493.500V363.500H478.500Z"
        fill="#808080"
        stroke="#000"
      />

      {/* corridor */}
      <path
        d="M534 196H581V268H625V292H706.500V365.500H581.500V309.500H480.500V277.500H534Z"
        fill="#430b13"
        stroke="#1a0508"
      />

      {/* offices */}
      <g fill="#8a8985" stroke="#000">
        <path d="M480.500 226.500H532.500V275.500H480.500Z" />
        <path d="M582.500 208.500H624.500V267.500H582.500Z" />
        <path d="M625.500 208.500H705.500V291.500H625.500Z" />
        <path d="M480.500 311.500H535.500V361.500H480.500Z" />
        <path d="M537.500 311.500H580.500V361.500H537.500Z" />
      </g>
      <path d="M660 208V242H625M625 208V292H706M582 267.500H625M536.500 311V362" stroke="#000" strokeWidth="2" fill="none" />
      <path d="M478.500 224.500H532M531.500 194.500V212M533.500 196V276M707.500 206V364M478.500 309.500H581M479 277.500H534" stroke="#000" fill="none" />
      <path d="M479 245V256M479 329V338" stroke="#000" strokeWidth="2" />

      {/* door swings */}
      <g fill="#8a8985" stroke="#000">
        <path d="M534 212.500H521.500L524 219L530 222H534" />
        <path d="M520 276L523 269L530 265.500V276" />
        <path d="M581 255L587 256L592 264.500H581" />
        <path d="M647 241.500L650 234L656 231V241.500" />
        <path d="M625 279L632 282L635.500 289.500H625" />
        <path d="M522 310L526 318L533 321V310M549 310L546 318L539 321V310" />
        <path d="M706 250.500H718.500L715 258L709 261.500L715 264L718.500 271.500H706" />
      </g>

      {/* open hall */}
      <path
        d="M544.500 363.500H581.500V366.500H734.500V535.500H531.500V459.500H557.500V428.500H544.500Z"
        fill="#554b90"
        stroke="#17142c"
      />
      <g stroke="#000" fill="none">
        <path d="M542.500 363V430.500H554.500V438.500M554.500 449V457.500H528.500V538.500H572.500V645" />
        <path d="M544 427.500H592.500M557 429.500H592.500M557.500 430V493M555.500 458V493" />
        <path d="M736.500 365V538M706 363.500V366M710 365.500H735M638 366H706" />
        <path d="M554.500 438.500H567.500L564 445L554.500 449" />
        <path d="M531 493H592.500M644 367V375M644 399V453H684M556.500 460V470" strokeWidth="2" />
        <path d="M682.500 453V445H684.500V453" />
        <path d="M736 387V429M736 477V520" strokeWidth="2" />
      </g>

      {/* garage */}
      <path d="M575.500 536H692.500V643.500H575.500Z" fill="#373533" stroke="#000" />
      <path d="M574 561V614M694 561V614" stroke="#000" strokeWidth="3" />
      <path d="M593 644H675" stroke="#000" strokeWidth="2" />
      <path d="M510 364V367M510 455V459M510 536V539M510 641V644M739 206V208M739 291V295" stroke="#000" strokeWidth="2" />

      {/* section marker */}
      <path d="M535 576.500H753" stroke="#000" />
      <path d="M753.500 576V588" stroke="#000" strokeWidth="3" />
      <path d="M516 577H536.500L527 587Z" fill="#2b50b4" />
      <circle cx="527.500" cy="577" r="7" fill="#7f8fc0" stroke="#1a3a9a" />
      <path d="M520.500 577H534.500" stroke="#1a3a9a" />

      {treeCenters.map((x) => (
        <Tree key={x} x={x} />
      ))}
    </svg>
  );
}

function NavigationBar() {
  return (
    <nav
      aria-label="Navigation bar"
      className="absolute right-0.5 top-[30px] flex h-[117px] w-[35px] flex-col items-center rounded-md border-2 border-[#c0c0c0] bg-[#f3f3f3]"
    >
      <button type="button" aria-label="Close navigation bar" className="mr-0.5 mt-0.5 self-end">
        <Icon className="h-2 w-2" box="0 0 8 8">
          <circle cx="4" cy="4" r="3.500" stroke="#aaa" fill="#ddd" />
          <path d="M2.500 2.500l3 3M5.500 2.500l-3 3" stroke="#888" />
        </Icon>
      </button>
      <button type="button" aria-label="Steering wheel" className="mt-2">
        <Icon className="h-7 w-7" box="0 0 28 28">
          <path d="M3 12a9 9 0 0 1 9-9h9v9a9 9 0 0 1-18 0Z" stroke="#999" fill="#eaeef3" />
          <circle cx="12" cy="12" r="4.500" stroke="#999" fill="#fff" />
          <path d="M6 18l3-3M15 9l3-3" stroke="#aaa" />
          <text x="14" y="24" fontSize="10" fontWeight="700" fill="#8899c4" stroke="none">
            2D
          </text>
        </Icon>
      </button>
      <Caret className="mt-0.5 text-[#999]" />
      <span className="mt-1 h-px w-[26px] bg-[#bbb]" />
      <button type="button" aria-label="Zoom" className="mt-1.5">
        <Icon className="h-5 w-5" box="0 0 20 20">
          <path d="M3 4h8" stroke="#aaa" strokeWidth="1.500" />
          <circle cx="12" cy="11" r="3.500" stroke="#999" />
          <path d="M14.500 13.500l3 3" stroke="#999" strokeWidth="1.500" />
        </Icon>
      </button>
      <Caret className="mt-2 text-[#999]" />
      <span className="mb-0.5 mr-0.5 mt-auto flex h-2 w-2 items-center self-end rounded-full border border-[#aaa] bg-[#ddd] px-px">
        <span className="h-px w-full bg-[#888]" />
      </span>
    </nav>
  );
}

const viewControls: IconName[] = [
  'hatch',
  'visualStyle',
  'sun',
  'shadow',
  'crop',
  'cropShow',
  'glasses',
  'lightbulb',
  'cropRegion',
  'analytical',
  'constraint',
];

function ViewControlBar() {
  return (
    <div className="flex h-[17px] items-center bg-[#ececec]">
      <div className="flex flex-1 items-center gap-[5px] pl-[79px]">
        {viewControls.map((name) => (
          <button key={name} type="button" aria-label={name}>
            {icons[name]}
          </button>
        ))}
        <svg viewBox="0 0 4 6" className="ml-[5px] h-1.5 w-1" aria-hidden>
          <path d="M4 0L0 3L4 6Z" fill="#333" />
        </svg>
        <span className="flex-1" />
        <span className="mr-[293px] h-[15px] w-[15px] border border-[#aaa] bg-gradient-to-b from-[#f8f8f8] to-[#d8d8d8]" />
      </div>
      <svg viewBox="0 0 4 6" className="mr-2 h-1.5 w-1" aria-hidden>
        <path d="M0 0L4 3L0 6Z" fill="#333" />
      </svg>
    </div>
  );
}

function DrawingArea() {
  return (
    <main className="ml-1 flex min-w-0 flex-1 border-l border-t border-[#666] bg-[#fdfdfd]">
      <div className="flex min-w-0 flex-1 flex-col">
        <div className="relative flex min-h-0 flex-1 overflow-hidden">
          <FloorPlan />
          <div className="absolute right-[5px] top-[9px] flex items-center gap-1.5">
            <button type="button" aria-label="Minimize view" className="mt-1.5 h-1 w-3 border border-[#444] bg-white" />
            <button type="button" aria-label="Restore view">
              <Icon className="h-3 w-3" box="0 0 12 12">
                <path d="M3.500 3V.5h8v8H9M.5 3.500h8v8h-8ZM3 6.500h3V9H3Z" />
              </Icon>
            </button>
            <button type="button" aria-label="Close view">
              <Icon className="h-3 w-3" box="0 0 12 12">
                <path d="M1 1h3l2 3 2-3h3L8 6l3 5H8L6 8l-2 3H1l3-5Z" fill="#fff" />
              </Icon>
            </button>
          </div>
          <NavigationBar />
        </div>
        <ViewControlBar />
      </div>
      <div className="flex w-4 flex-col items-center bg-[#ececec] pb-6 pt-2">
        <BigCaret className="rotate-180 text-[#222]" />
        <span className="h-[233px]" />
        <span className="h-[15px] w-[15px] border border-[#aaa] bg-gradient-to-r from-[#f8f8f8] to-[#d8d8d8]" />
        <BigCaret className="mt-auto text-[#222]" />
      </div>
    </main>
  );
}

/* ------------------------------------------------------------------ */
/* Context menu and status bar                                         */
/* ------------------------------------------------------------------ */

const menuItems = [
  'New Schedule/Quantities...',
  'New Graphical Column Schedule...',
  'New Material Takeoff...',
  'New Sheet List...',
  'New Note Block...',
  'New View List...',
];

function ContextMenu() {
  return (
    <div
      role="menu"
      className="absolute left-[138px] top-[598px] flex w-[272px] flex-col border border-[#979797] bg-[#f0f0f0] p-px text-xs text-[#111] shadow-[3px_3px_3px_rgba(0,0,0,0.45)]"
    >
      {menuItems.map((item, i) => (
        <button
          key={item}
          type="button"
          role="menuitem"
          className={clsx(
            'h-[22px] whitespace-nowrap rounded-xs border pl-[31px] text-left leading-5',
            i === 0 ? 'border-[#b4cbe6] bg-[#e7ecf5]' : 'border-transparent',
          )}
        >
          {item}
        </button>
      ))}
    </div>
  );
}

function Pointer() {
  return (
    <svg viewBox="0 0 12 19" className="pointer-events-none absolute left-[197px] top-[611px] h-[19px] w-3" aria-hidden>
      <path d="M.5 1v14.500L4 12.300l2.300 5.700 2.700-1.100L6.700 11.500H11.500Z" fill="#fff" stroke="#222" />
    </svg>
  );
}

function Watermark() {
  return (
    <svg viewBox="0 0 46 46" className="pointer-events-none absolute bottom-6 right-[27px] h-[46px] w-[46px]" aria-hidden>
      <circle cx="23" cy="23" r="23" fill="#b4b4b4" fillOpacity=".8" />
      <path d="M13 13.500L31 23L13 32.500ZM18.500 11.500L36.500 23L18.500 34.500Z" fill="none" stroke="#fff" strokeWidth="1.800" />
    </svg>
  );
}

function StatusBar() {
  return (
    <footer className="flex h-[26px] shrink-0 items-center border-t border-[#777] bg-gradient-to-b from-[#e8e8e8] to-[#b9b9bd] text-[#111]">
      <p className="w-[432px] pl-0.5">Create a schedule</p>
      <button type="button" aria-label="Worksets" className="flex w-6">
        {icons.worksets}
      </button>
      <div className="relative">
        <select aria-label="Active workset" disabled className="block h-5 w-[205px] appearance-none bg-white">
          <option />
        </select>
        <BigCaret className="pointer-events-none absolute right-[3px] top-[9px] text-[#aaa]" />
      </div>
      <button type="button" className="ml-2 flex w-[53px] items-center gap-1">
        {icons.filter}
        :0
      </button>
      <button type="button" aria-label="Design options">
        {icons.optionSet}
      </button>
      <button type="button" aria-label="Pick to edit" className="ml-2.5">
        {icons.optionPick}
      </button>
      <div className="relative ml-[7px]">
        <select
          aria-label="Active design option"
          disabled
          className="block h-5 w-[155px] appearance-none bg-white pl-[3px] text-xs text-[#888] opacity-100"
        >
          <option>Main Model</option>
        </select>
        <BigCaret className="pointer-events-none absolute right-[3px] top-[9px] text-[#aaa]" />
      </div>
      <div className="ml-auto mr-[26px] flex gap-[10px]">
        <button type="button" aria-label="Select links">{icons.pickLinks}</button>
        <button type="button" aria-label="Select underlay elements">{icons.pickUnderlay}</button>
        <button type="button" aria-label="Select pinned elements">{icons.pickPinned}</button>
        <button type="button" aria-label="Select elements by face">{icons.pickFace}</button>
      </div>
    </footer>
  );
}

export default function App() {
  return (
    <div className="relative flex h-screen flex-col overflow-hidden bg-[#dedee4] font-['Open_Sans','Noto_Sans',sans-serif] text-xs">
      <div className="flex min-h-0 flex-1 flex-col border-l-4 border-r-[5px] border-l-[#96969e] border-r-[#a6a6b0]">
        <header className="flex shrink-0 bg-[linear-gradient(#555_0px,#555_1px,#dcdcdc_1px,#f0f0f0_6px,#b9b9b9_26px,#9d9d9d_27px)]">
          <button
            type="button"
            aria-label="Application menu"
            className="mt-1 flex h-[41px] w-[41px] items-center justify-center border border-black bg-gradient-to-b from-[#c4c4c4] to-[#8c8c8c]"
          >
            <Icon className="h-8 w-[35px]" box="0 0 35 32">
              <path d="M9 3L17 1 20 6 19 13 17 16 24 25 18 27 12 20 9 20 8 27 2 28Z" fill="#1c2a72" stroke="none" />
              <path d="M9 3L17 1 20 6 13 9Z" fill="#101a4e" stroke="none" />
              <path d="M9 14L19 13 17 16 24 25 18 27 12 20 9 20Z" fill="#2748a8" stroke="none" />
              <path d="M27 14h6l-3 4Z" fill="#222" stroke="none" />
            </Icon>
          </button>
          <div className="min-w-0 flex-1">
            <TitleBar />
            <TabStrip />
          </div>
        </header>
        <Ribbon />
        <div className="h-[27px] shrink-0" />
        <div className="flex min-h-0 flex-1">
          <aside className="flex w-[318px] shrink-0 flex-col pl-px pt-px">
            <PropertiesPalette />
            <ProjectBrowser />
          </aside>
          <DrawingArea />
        </div>
        <div className="h-[3px] shrink-0 bg-[#f0f0f0]" />
        <StatusBar />
      </div>
      <ContextMenu />
      <Pointer />
      <Watermark />
    </div>
  );
}
